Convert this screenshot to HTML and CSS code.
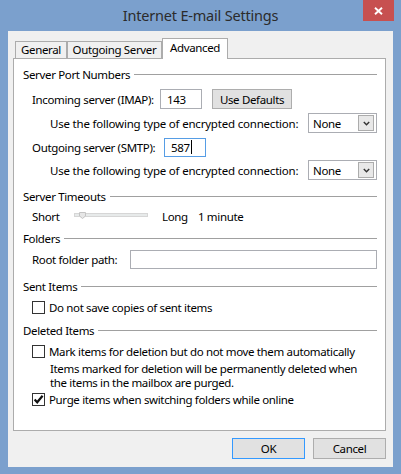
FILE: index.html
```html
<!DOCTYPE html>
<html>
<head>
<meta charset="utf-8">
<title>Internet E-mail Settings</title>
<link rel="stylesheet" href="styles.css">
</head>
<body>
<div class="window">
  <div class="titlebar">
    <div></div>
    <div class="title">Internet E-mail Settings</div>
    <div class="close">
      <svg width="9" height="8" viewBox="0 0 9 8"><path d="M1 0.8 L8 7.2 M8 0.8 L1 7.2" stroke="#fff" stroke-width="1.9"/></svg>
    </div>
  </div>
  <div class="client">
    <div class="tabs">
      <div class="tab t-general">General</div>
      <div class="tab t-outgoing">Outgoing Server</div>
      <div class="tab tab-active t-advanced">Advanced</div>
    </div>
    <div class="panel">
      <div class="row heading m5"><span>Server Port Numbers</span><i class="rule"></i></div>
      <div class="row ind m5">
        <span class="lbl-imap">Incoming server (IMAP):</span>
        <div class="input in-imap">143</div>
        <div class="btn btn-def">Use Defaults</div>
      </div>
      <div class="row ind2 m4">
        <span class="lbl-enc">Use the following type of encrypted connection:</span>
        <div class="select">None<span class="drop"><svg width="7" height="5" viewBox="0 0 7 5"><path d="M0.8 1 L3.5 3.8 L6.2 1" stroke="#333" stroke-width="1.4" fill="none"/></svg></span></div>
      </div>
      <div class="row ind m4">
        <span class="lbl-smtp">Outgoing server (SMTP):</span>
        <div class="input in-smtp focus">587<i class="caret"></i></div>
      </div>
      <div class="row ind2 m3">
        <span class="lbl-enc">Use the following type of encrypted connection:</span>
        <div class="select">None<span class="drop"><svg width="7" height="5" viewBox="0 0 7 5"><path d="M0.8 1 L3.5 3.8 L6.2 1" stroke="#333" stroke-width="1.4" fill="none"/></svg></span></div>
      </div>
      <div class="row heading m6"><span>Server Timeouts</span><i class="rule"></i></div>
      <div class="row ind m0">
        <span class="lbl-short">Short</span>
        <div class="track"><span class="thumb"><svg width="7" height="7" viewBox="0 0 7 7"><path d="M0.5 0.5 H6.5 V4 L3.5 6.5 L0.5 4 Z" fill="#e6e6e6" stroke="#c4c4c4"/></svg></span></div>
        <span class="lbl-long">Long</span>
        <span>1 minute</span>
      </div>
      <div class="row heading m2"><span>Folders</span><i class="rule"></i></div>
      <div class="row ind m1">
        <span class="lbl-root">Root folder path:</span>
        <div class="input in-root"></div>
      </div>
      <div class="row heading m7"><span>Sent Items</span><i class="rule"></i></div>
      <div class="row ind m1">
        <span class="check"></span><span>Do not save copies of sent items</span>
      </div>
      <div class="row heading m3"><span>Deleted Items</span><i class="rule"></i></div>
      <div class="row ind m1">
        <span class="check"></span><span>Mark items for deletion but do not move them automatically</span>
      </div>
      <div class="note">
        <div class="note-line">Items marked for deletion will be permanently deleted when</div>
        <div class="note-line">the items in the mailbox are purged.</div>
      </div>
      <div class="row ind row-purge">
        <span class="check"><svg width="11" height="11" viewBox="0 0 11 11"><path d="M1.6 5.6 L4.2 8.3 L9.6 1.8" stroke="#111" stroke-width="2.2" fill="none"/></svg></span><span>Purge items when switching folders while online</span>
      </div>
    </div>
    <div class="footer">
      <div class="btn btn-dlg btn-ok">OK</div>
      <div class="btn btn-dlg">Cancel</div>
    </div>
  </div>
</div>
</body>
</html>
```
FILE: styles.css
```css
* { box-sizing: border-box; }
html, body { margin: 0; padding: 0; }
body {
  width: 401px;
  height: 474px;
  overflow: hidden;
  background: #7ba0cd;
  font-family: "Noto Sans", "Open Sans", sans-serif;
  font-size: 11.5px;
  letter-spacing: -0.35px;
  color: #000;
}
.window {
  width: 401px;
  height: 474px;
  display: flex;
  flex-direction: column;
  background: #7ba0cd;
}
.titlebar {
  height: 31px;
  display: grid;
  grid-template-columns: 1fr auto 1fr;
}
.title {
  font-size: 14.5px;
  line-height: 30px;
  color: #2b2b2b;
  letter-spacing: -0.2px;
}
.close {
  justify-self: end;
  width: 31px;
  height: 21px;
  margin-right: 7px;
  background: #c75050;
  display: flex;
  align-items: center;
  justify-content: center;
}
.client {
  flex: 1;
  margin: 0 8px 7px 8px;
  background: #f0f0f0;
  padding: 7px 7px 8px 5px;
  display: flex;
  flex-direction: column;
}
.tabs {
  height: 20px;
  display: flex;
  align-items: flex-end;
  padding-left: 2px;
}
.tab {
  height: 17px;
  border: 1px solid #acacac;
  border-bottom: none;
  background: #f0f0f0;
  line-height: 16px;
  text-align: center;
  white-space: nowrap;
}
.t-general { width: 52px; }
.t-outgoing { width: 95px; }
.t-advanced { width: 66px; }
.tab-active {
  height: 21px;
  margin-bottom: -1px;
  background: #fff;
  line-height: 18px;
  position: relative;
  z-index: 1;
}
.panel {
  height: 373px;
  background: #fff;
  border: 1px solid #acacac;
  padding: 0 8px 0 9px;
}
.row {
  height: 20px;
  display: flex;
  align-items: center;
  white-space: nowrap;
}
.m0 { margin-top: 0; }
.m1 { margin-top: 1px; }
.m2 { margin-top: 2px; }
.m3 { margin-top: 3px; }
.m4 { margin-top: 4px; }
.m5 { margin-top: 5px; }
.m6 { margin-top: 6px; }
.m7 { margin-top: 7px; }
.rule {
  flex: 1;
  height: 0;
  border-top: 1px solid #a0a0a0;
  margin-left: 4px;
}
.ind { padding-left: 9px; }
.ind2 { padding-left: 27px; }
.lbl-imap { width: 128px; flex-shrink: 0; }
.lbl-smtp { width: 132px; flex-shrink: 0; }
.lbl-enc { width: 258px; flex-shrink: 0; letter-spacing: -0.2px; }
.lbl-short { width: 42px; }
.lbl-long { width: 36px; margin-left: 14px; }
.lbl-root { width: 98px; flex-shrink: 0; }
.input {
  height: 20px;
  border: 1px solid #abadb3;
  background: #fff;
  padding-left: 6px;
  line-height: 17px;
  display: flex;
  align-items: center;
  flex-shrink: 0;
}
.in-imap { width: 42px; }
.in-smtp { width: 42px; height: 19px; }
.in-root { flex: 1 1 auto; height: 19px; }
.focus { border-color: #569de5; }
.caret {
  width: 1px;
  height: 14px;
  background: #000;
  margin-left: 1px;
}
.btn {
  height: 20px;
  border: 1px solid #adadad;
  background: #e1e1e1;
  display: flex;
  align-items: center;
  justify-content: center;
  flex-shrink: 0;
}
.btn-def { width: 80px; margin-left: 10px; }
.select {
  margin-left: auto;
  width: 69px;
  height: 20px;
  border: 1px solid #abadb3;
  background: #fff;
  padding-left: 4px;
  display: flex;
  align-items: center;
  flex-shrink: 0;
}
.drop {
  margin-left: auto;
  margin-right: 2px;
  width: 16px;
  height: 16px;
  border: 1px solid #acacac;
  background: #e8e8e8;
  display: flex;
  align-items: center;
  justify-content: center;
}
.track {
  width: 74px;
  height: 4px;
  margin-top: -3px;
  border: 1px solid #d6d6d6;
  background: #e7eaea;
  position: relative;
}
.thumb {
  position: absolute;
  left: 4px;
  top: -2px;
  width: 7px;
  height: 7px;
  display: block;
  line-height: 0;
}
.check {
  width: 13px;
  height: 13px;
  border: 1px solid #333;
  background: #fff;
  margin-right: 4px;
  display: flex;
  align-items: center;
  justify-content: center;
  flex-shrink: 0;
}
.note {
  margin-top: 1px;
  padding-left: 27px;
  height: 28px;
  white-space: nowrap;
}
.note-line {
  height: 14px;
  line-height: 14px;
}
.row-purge { height: 18px; }
.footer {
  margin-top: 7px;
  display: flex;
  justify-content: flex-end;
  gap: 8px;
}
.btn-dlg { width: 73px; height: 21px; }
.btn-ok { border-color: #3399ff; }
```
